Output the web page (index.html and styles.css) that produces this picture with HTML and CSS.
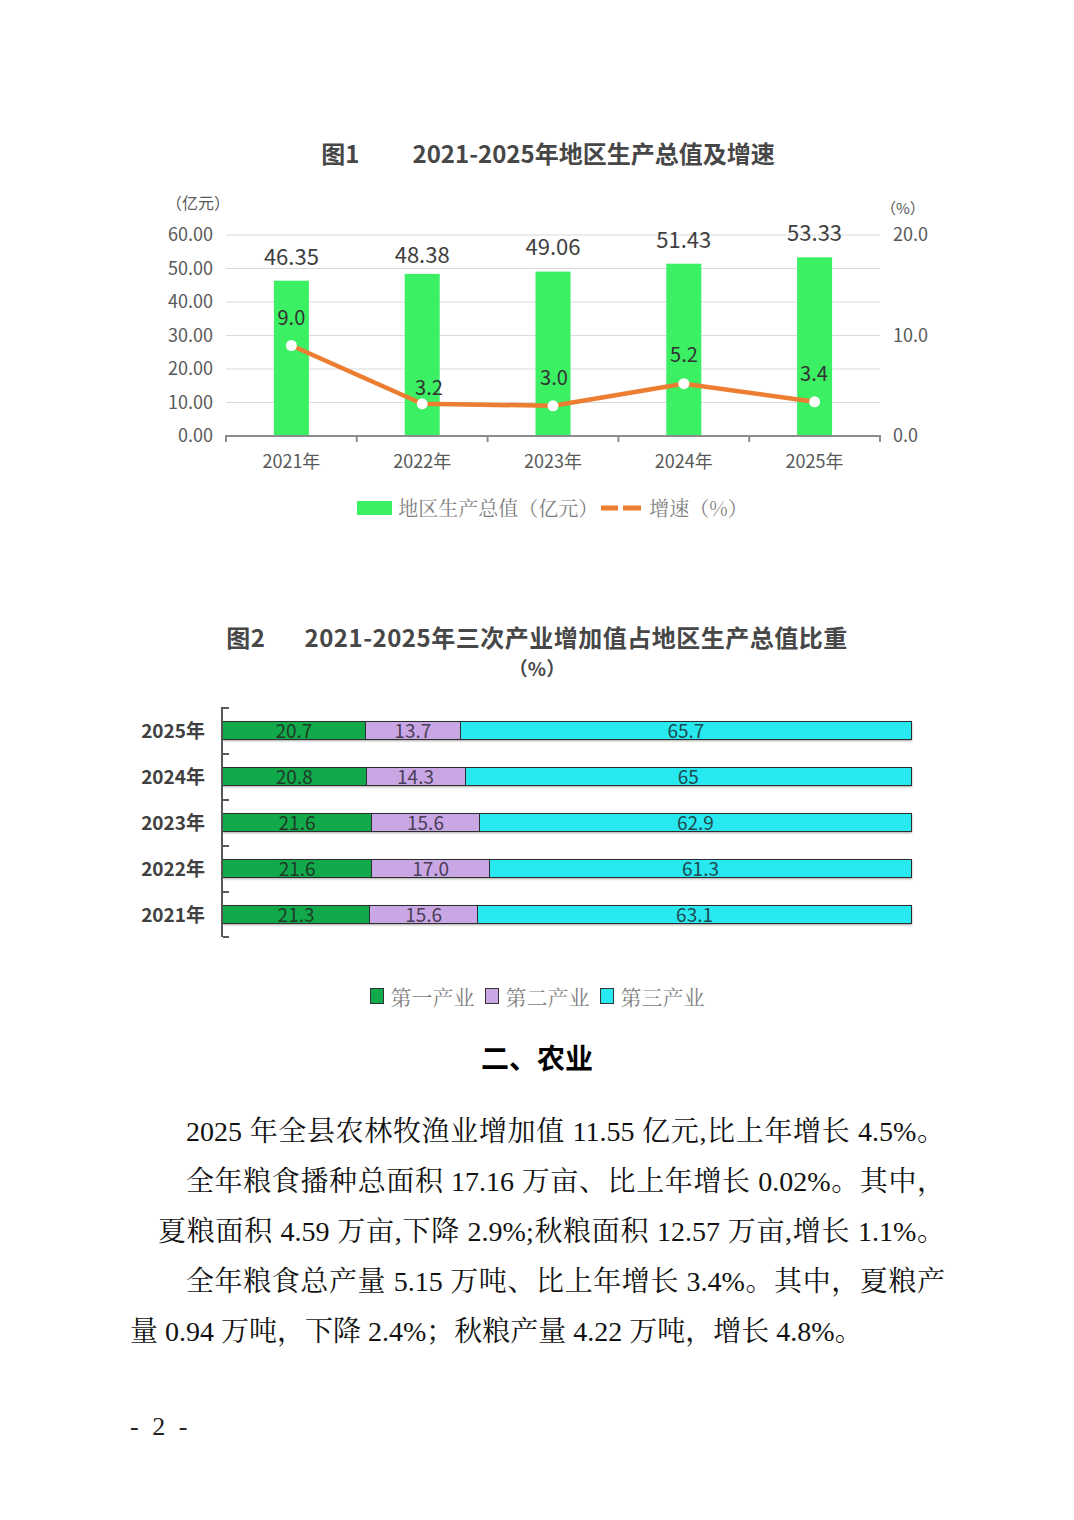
FILE: index.html
```html
<!DOCTYPE html>
<html lang="zh-CN">
<head>
<meta charset="utf-8">
<title>2021-2025年地区生产总值</title>
<link rel="stylesheet" href="styles.css">
</head>
<body>
<div class="page">
  <section class="fig fig1">
    <h2 class="fig-title t1"><span class="fig-no n1">图1</span>2021-2025年地区生产总值及增速</h2>
    <svg class="chart1" viewBox="0 168 1074 310" width="1074" height="310" xmlns="http://www.w3.org/2000/svg">
      <text class="unit" x="166" y="209">（亿元）</text>
      <text class="unit unit-r" x="881" y="214">（%）</text>
      <g class="grid">
        <line x1="226" y1="235" x2="880" y2="235"/>
        <line x1="226" y1="268.5" x2="880" y2="268.5"/>
        <line x1="226" y1="302" x2="880" y2="302"/>
        <line x1="226" y1="335.5" x2="880" y2="335.5"/>
        <line x1="226" y1="369" x2="880" y2="369"/>
        <line x1="226" y1="402.5" x2="880" y2="402.5"/>
      </g>
      <g class="ax-l">
        <text x="213" y="241">60.00</text>
        <text x="213" y="274.5">50.00</text>
        <text x="213" y="308">40.00</text>
        <text x="213" y="341.5">30.00</text>
        <text x="213" y="375">20.00</text>
        <text x="213" y="408.5">10.00</text>
        <text x="213" y="442">0.00</text>
      </g>
      <g class="ax-r">
        <text x="893" y="241">20.0</text>
        <text x="893" y="342">10.0</text>
        <text x="893" y="442">0.0</text>
      </g>
      <g class="bar1">
        <rect x="273.9" y="280.7" width="35" height="155.3"/>
        <rect x="404.7" y="273.9" width="35" height="162.1"/>
        <rect x="535.5" y="271.6" width="35" height="164.4"/>
        <rect x="666.3" y="263.7" width="35" height="172.3"/>
        <rect x="797.1" y="257.3" width="35" height="178.7"/>
      </g>
      <g class="axis">
        <line x1="225" y1="436" x2="881" y2="436"/>
        <line x1="226" y1="436" x2="226" y2="442"/>
        <line x1="356.8" y1="436" x2="356.8" y2="442"/>
        <line x1="487.6" y1="436" x2="487.6" y2="442"/>
        <line x1="618.4" y1="436" x2="618.4" y2="442"/>
        <line x1="749.2" y1="436" x2="749.2" y2="442"/>
        <line x1="880" y1="436" x2="880" y2="442"/>
      </g>
      <g class="val">
        <text x="291.4" y="265">46.35</text>
        <text x="422.2" y="263">48.38</text>
        <text x="553" y="255">49.06</text>
        <text x="683.8" y="248">51.43</text>
        <text x="814.6" y="241">53.33</text>
      </g>
      <polyline class="rate" points="291.4,345.5 422.2,403.8 553,405.8 683.8,383.7 814.6,401.8"/>
      <g class="dot">
        <circle cx="291.4" cy="345.5" r="5.5"/>
        <circle cx="422.2" cy="403.8" r="5.5"/>
        <circle cx="553" cy="405.8" r="5.5"/>
        <circle cx="683.8" cy="383.7" r="5.5"/>
        <circle cx="814.6" cy="401.8" r="5.5"/>
      </g>
      <g class="rate-lbl">
        <text x="291.4" y="325">9.0</text>
        <text x="429" y="395">3.2</text>
        <text x="554" y="385">3.0</text>
        <text x="684" y="362">5.2</text>
        <text x="814" y="381">3.4</text>
      </g>
      <g class="cat">
        <text x="291.4" y="468">2021年</text>
        <text x="422.2" y="468">2022年</text>
        <text x="553" y="468">2023年</text>
        <text x="683.8" y="468">2024年</text>
        <text x="814.6" y="468">2025年</text>
      </g>
    </svg>
    <div class="legend legend1">
      <span class="lg-item"><i class="sw-bar"></i>地区生产总值（亿元）</span>
      <span class="lg-item"><svg class="sw-line" width="40" height="6" viewBox="0 0 40 6"><rect x="0" y="0.5" width="17" height="5"/><rect x="22" y="0.5" width="18" height="5"/></svg>增速（%）</span>
    </div>
  </section>

  <section class="fig fig2">
    <h2 class="fig-title t2"><span class="t2-main"><span class="fig-no n2">图2</span>2021-2025年三次产业增加值占地区生产总值比重</span><span class="t2-unit">（%）</span></h2>
    <div class="bars">
      <div class="row">
        <div class="yr">2025年</div>
        <div class="plot"><div class="bar">
          <div class="seg s1" style="flex-grow:20.7">20.7</div>
          <div class="seg s2" style="flex-grow:13.7">13.7</div>
          <div class="seg s3" style="flex-grow:65.7">65.7</div>
        </div></div>
      </div>
      <div class="row">
        <div class="yr">2024年</div>
        <div class="plot"><div class="bar">
          <div class="seg s1" style="flex-grow:20.8">20.8</div>
          <div class="seg s2" style="flex-grow:14.3">14.3</div>
          <div class="seg s3" style="flex-grow:65">65</div>
        </div></div>
      </div>
      <div class="row">
        <div class="yr">2023年</div>
        <div class="plot"><div class="bar">
          <div class="seg s1" style="flex-grow:21.6">21.6</div>
          <div class="seg s2" style="flex-grow:15.6">15.6</div>
          <div class="seg s3" style="flex-grow:62.9">62.9</div>
        </div></div>
      </div>
      <div class="row">
        <div class="yr">2022年</div>
        <div class="plot"><div class="bar">
          <div class="seg s1" style="flex-grow:21.6">21.6</div>
          <div class="seg s2" style="flex-grow:17.0">17.0</div>
          <div class="seg s3" style="flex-grow:61.3">61.3</div>
        </div></div>
      </div>
      <div class="row">
        <div class="yr">2021年</div>
        <div class="plot"><div class="bar">
          <div class="seg s1" style="flex-grow:21.3">21.3</div>
          <div class="seg s2" style="flex-grow:15.6">15.6</div>
          <div class="seg s3" style="flex-grow:63.1">63.1</div>
        </div></div>
      </div>
    </div>
    <div class="legend legend2">
      <span class="lg-item"><i class="sq q1"></i>第一产业</span>
      <span class="lg-item"><i class="sq q2"></i>第二产业</span>
      <span class="lg-item"><i class="sq q3"></i>第三产业</span>
    </div>
  </section>

  <h1 class="sec-title">二、农业</h1>
  <div class="body-text">
    <p class="ln ind2 full">2025 年全县农林牧渔业增加值 11.55 亿元,比上年增长 4.5%。</p>
    <p class="ln ind2 full">全年粮食播种总面积 17.16 万亩、比上年增长 0.02%。其中，</p>
    <p class="ln ind1 full">夏粮面积 4.59 万亩,下降 2.9%;秋粮面积 12.57 万亩,增长 1.1%。</p>
    <p class="ln ind2 full">全年粮食总产量 5.15 万吨、比上年增长 3.4%。其中，夏粮产</p>
    <p class="ln">量 0.94 万吨，下降 2.4%；秋粮产量 4.22 万吨，增长 4.8%。</p>
  </div>
  <div class="page-no">- 2 -</div>
</div>
</body>
</html>
```

FILE: styles.css
```css
* { box-sizing: border-box; }
html, body { margin: 0; padding: 0; background: #fff; }
body {
  width: 1074px;
  height: 1520px;
  overflow: hidden;
  font-family: "Noto Sans CJK SC", sans-serif;
  color: #222;
}
.page { padding-top: 138px; }

/* figure titles */
.fig-title {
  margin: 0;
  text-align: center;
  font-size: 24px;
  line-height: 30px;
  font-weight: 700;
  color: #474747;
  font-family: "Noto Sans CJK SC", sans-serif;
}
.t1 { padding-left: 22px; }
.n1 { margin-right: 53px; }
.t2-main { display: block; letter-spacing: 0.5px; }
.t2-unit { display: block; font-size: 19px; line-height: 32px; }
.n2 { margin-right: 39px; }

/* chart 1 */
.chart1 { display: block; }
.chart1 text { font-family: "Noto Sans CJK SC", sans-serif; }
.unit { font-size: 16px; fill: #595959; }
.unit-r { font-size: 15px; }
.grid line { stroke: #d9d9d9; stroke-width: 1; }
.ax-l text { font-size: 18px; fill: #595959; text-anchor: end; }
.ax-r text { font-size: 18px; fill: #595959; }
.bar1 rect { fill: #3cf064; }
.axis line { stroke: #8c8c8c; stroke-width: 2; }
.val text { font-size: 22px; fill: #404040; text-anchor: middle; }
.rate { fill: none; stroke: #ed7d31; stroke-width: 4.5; stroke-linejoin: round; stroke-linecap: round; }
.dot circle { fill: #fff; }
.rate-lbl text { font-size: 20px; fill: #333; text-anchor: middle; }
.cat text { font-size: 18px; fill: #595959; text-anchor: middle; }

/* legends */
.legend {
  display: flex;
  justify-content: center;
  align-items: center;
  height: 30px;
  line-height: 30px;
  color: #7f7f7f;
  font-family: "Noto Serif CJK SC", "Noto Sans CJK SC", serif;
}
.lg-item { display: inline-flex; align-items: center; }
.legend1 { margin-top: 15px; padding-left: 31px; font-size: 20px; }
.legend1 .lg-item + .lg-item { margin-left: 3px; }
.sw-bar { display: inline-block; width: 35px; height: 14px; background: #3cf064; margin-right: 6px; }
.sw-line { display: block; margin-right: 8px; }
.sw-line rect { fill: #ed7d31; }

.legend2 { margin-top: 44px; font-size: 21px; }
.legend2 .lg-item + .lg-item { margin-left: 10px; }
.sq { display: inline-block; width: 14px; height: 16px; border: 1.5px solid #333; margin-right: 7px; }
.q1 { background: #12a94b; }
.q2 { background: #c9a7e5; }
.q3 { background: #28e9ef; }

/* chart 2 */
.fig2 { margin-top: 99px; }
.bars { margin-top: 23px; padding-left: 130px; }
.row { display: flex; height: 46px; }
.yr {
  width: 75px;
  margin-right: 16px;
  text-align: right;
  line-height: 46px;
  font-size: 19px;
  font-weight: 700;
  color: #404040;
}
.plot {
  position: relative;
  width: 691px;
  border-left: 2px solid #595959;
  display: flex;
  align-items: center;
}
.plot::before {
  content: "";
  position: absolute;
  left: 0;
  top: 0;
  width: 6px;
  height: 2px;
  background: #595959;
}
.row:last-child .plot::after {
  content: "";
  position: absolute;
  left: 0;
  bottom: -1px;
  width: 6px;
  height: 2px;
  background: #595959;
}
.bar {
  display: flex;
  width: 100%;
  height: 19px;
  border: 1.5px solid #2d2d2d;
  border-left: 0;
  box-shadow: 0 1px 2px rgba(0, 0, 0, 0.35);
}
.seg {
  flex-basis: 0;
  display: flex;
  align-items: center;
  justify-content: center;
  font-size: 19px;
  line-height: 16px;
  color: #333;
  white-space: nowrap;
}
.seg + .seg { border-left: 1.5px solid #2d2d2d; }
.s1 { background: #12a94b; color: #1f3a27; }
.s2 { background: #c9a7e5; color: #4a3d57; }
.s3 { background: #28e9ef; color: #1e4a50; }

/* section */
.sec-title {
  margin: 28px 0 0;
  text-align: center;
  font-size: 28px;
  line-height: 36px;
  font-weight: 700;
  color: #000;
  font-family: "Noto Sans CJK SC", sans-serif;
}
.body-text {
  margin-top: 32px;
  margin-left: 130px;
  width: 815px;
  font-family: "Liberation Serif", "Noto Serif CJK SC", "Noto Sans CJK SC", serif;
  font-size: 28px;
  line-height: 50px;
  color: #111;
}
.ln { margin: 0; white-space: normal; }
.full { text-align: justify; text-align-last: justify; }
.ind2 { padding-left: 56px; }
.ind1 { padding-left: 28px; }

.page-no {
  margin-top: 55px;
  padding-left: 130px;
  font-family: "Liberation Serif", serif;
  font-size: 26px;
  line-height: 30px;
  letter-spacing: 3.5px;
  color: #222;
}
```
